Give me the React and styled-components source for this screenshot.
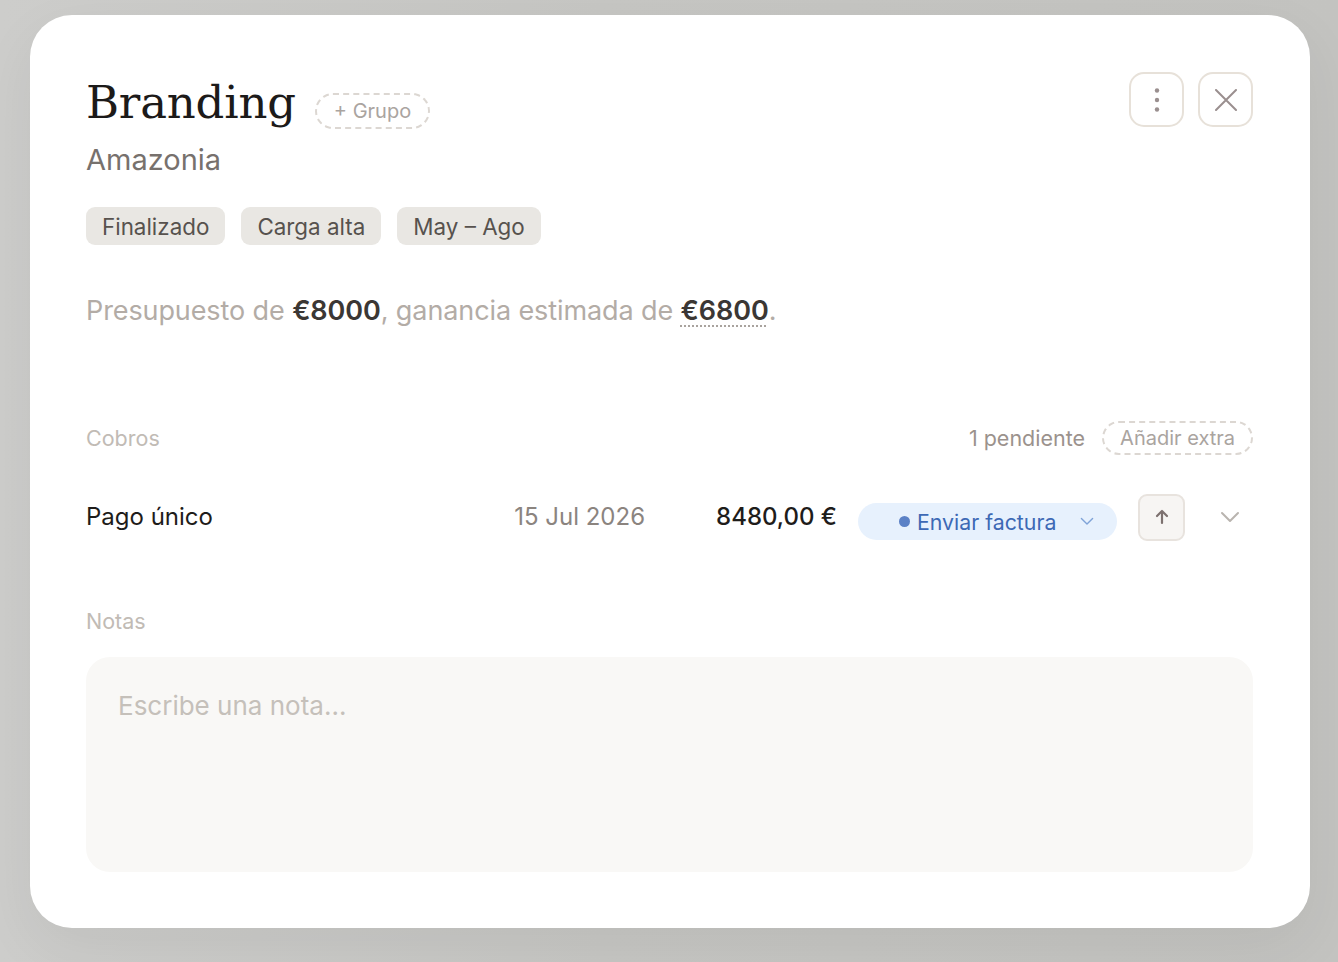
import React from 'react'
import styled, { createGlobalStyle } from 'styled-components'

const Global = createGlobalStyle`
  html, body { margin: 0; padding: 0; }
  body {
    background: #c7c7c4;
    font-family: Inter, "Noto Sans", sans-serif;
    -webkit-font-smoothing: antialiased;
  }
  * { box-sizing: border-box; }
`

const Page = styled.div`
  width: 1338px;
  height: 962px;
  padding: 15px 28px 34px 30px;
  background: linear-gradient(90deg, #cdcdcb 0%, #c6c6c3 45%, #c3c3c0 100%);
  overflow: hidden;
`

const Modal = styled.section`
  width: 1280px;
  height: 913px;
  background: #fff;
  border-radius: 42px;
  padding: 57px 57px 56px 56px;
  display: flex;
  flex-direction: column;
  box-shadow: 0 20px 60px rgba(0, 0, 0, 0.06);
`

const Header = styled.header`
  display: flex;
  justify-content: space-between;
  align-items: flex-start;
`

const TitleBlock = styled.div`
  display: flex;
  flex-direction: column;
`

const TitleRow = styled.div`
  display: flex;
  align-items: baseline;
  gap: 19px;
`

const Title = styled.h1`
  margin: 0;
  font-family: "DejaVu Serif", "Liberation Serif", serif;
  font-weight: 400;
  font-size: 45px;
  line-height: 62px;
  letter-spacing: -0.2px;
  color: #1c1a19;
`

const DashedPill = styled.button`
  font-family: Inter, sans-serif;
  font-size: ${p => p.$size || 20}px;
  color: #aaa4a0;
  background: transparent;
  border: 2px dashed #dcd7d2;
  border-radius: 999px;
  padding: ${p => p.$pad || '4px 17px'};
  line-height: 24px;
  cursor: pointer;
`

const Client = styled.div`
  margin-top: 8px;
  font-size: 29px;
  line-height: 36px;
  color: #77716d;
`

const Actions = styled.div`
  display: flex;
  gap: 14px;
`

const IconButton = styled.button`
  width: 55px;
  height: 55px;
  border-radius: 15px;
  border: 2px solid #e7e1d9;
  background: #fff;
  display: flex;
  align-items: center;
  justify-content: center;
  padding: 0;
  cursor: pointer;
`

const Tags = styled.div`
  display: flex;
  gap: 16px;
  margin-top: 29px;
`

const Tag = styled.span`
  height: 38px;
  padding: 0 16px;
  border-radius: 9px;
  background: #e9e7e3;
  color: #57524e;
  font-size: 22.4px;
  display: flex;
  align-items: center;
`

const Budget = styled.p`
  margin: 48px 0 0;
  font-size: 27px;
  line-height: 36px;
  color: #b3aca6;
  letter-spacing: -0.1px;
`

const Strong = styled.b`
  font-weight: 600;
  color: #3b3734;
  ${p => p.$dotted && `
    text-decoration: underline dotted #a9a39e 2px;
    text-underline-offset: 5px;
  `}
`

const SectionHead = styled.div`
  margin-top: ${p => p.$top}px;
  display: flex;
  justify-content: space-between;
  align-items: center;
  min-height: 36px;
`

const Label = styled.span`
  font-size: 21.5px;
  color: #c1bbb5;
`

const HeadRight = styled.div`
  display: flex;
  align-items: center;
  gap: 17px;
`

const Pending = styled.span`
  font-size: 21.5px;
  color: #9b928d;
`

const PayRow = styled.div`
  margin-top: 38px;
  height: 46px;
  display: flex;
  align-items: center;
`

const PayName = styled.span`
  flex: 1;
  font-size: 24px;
  color: #1e1c1a;
  margin-top: -2px;
`

const PayDate = styled.span`
  font-size: 24px;
  color: #8b847f;
  margin-right: 71px;
  margin-top: -2px;
`

const PayAmount = styled.span`
  font-size: 24px;
  font-weight: 500;
  color: #1e1c1a;
  margin-right: 21px;
  margin-top: -2px;
`

const StatusPill = styled.button`
  width: 259px;
  height: 37px;
  margin-top: 9px;
  border: none;
  border-radius: 999px;
  background: #e7f1fd;
  color: #3d69b5;
  font-family: Inter, sans-serif;
  font-size: 21.3px;
  display: flex;
  align-items: center;
  padding: 0 0 0 41px;
  cursor: pointer;
`

const Dot = styled.span`
  width: 11px;
  height: 11px;
  border-radius: 50%;
  background: #5b81c6;
  margin-right: 7px;
`

const PillChevron = styled.span`
  margin-left: 24px;
  display: flex;
`

const UpButton = styled.button`
  width: 47px;
  height: 47px;
  margin-left: 21px;
  border-radius: 9px;
  border: 2px solid #e8e3de;
  background: #f7f5f3;
  display: flex;
  align-items: center;
  justify-content: center;
  padding: 0;
`

const Expand = styled.span`
  width: 46px;
  margin-left: 22px;
  display: flex;
  justify-content: center;
`

const Notes = styled.textarea`
  margin-top: 18px;
  width: 100%;
  height: 215px;
  border: none;
  border-radius: 24px;
  background: #f9f8f6;
  padding: 31px 32px;
  font-family: Inter, sans-serif;
  font-size: 26px;
  line-height: 35px;
  color: #3b3734;
  resize: none;
  outline: none;
  &::placeholder { color: #c5c0ba; }
`

const Kebab = () => (
  <svg width="10" height="30" viewBox="0 0 10 30">
    <circle cx="5" cy="5.5" r="2.2" fill="#9a8f8f" />
    <circle cx="5" cy="15" r="2.2" fill="#9a8f8f" />
    <circle cx="5" cy="24.5" r="2.2" fill="#9a8f8f" />
  </svg>
)

const Close = () => (
  <svg width="22" height="22" viewBox="0 0 22 22" fill="none" stroke="#9a8f8f" strokeWidth="2" strokeLinecap="round">
    <path d="M1 1l20 20M21 1L1 21" />
  </svg>
)

const ArrowUp = () => (
  <svg width="16" height="16" viewBox="0 0 16 16" fill="none" stroke="#7d716f" strokeWidth="2.2" strokeLinecap="round" strokeLinejoin="round">
    <path d="M8 14V2M3 7l5-5 5 5" />
  </svg>
)

const Chevron = ({ size, color, width = 2 }) => (
  <svg width={size} height={size * 0.6} viewBox="0 0 20 12" fill="none" stroke={color} strokeWidth={width} strokeLinecap="round" strokeLinejoin="round">
    <path d="M2 2l8 8 8-8" />
  </svg>
)

export default function App() {
  return (
    <>
      <Global />
      <Page>
        <Modal>
          <Header>
            <TitleBlock>
              <TitleRow>
                <Title>Branding</Title>
                <DashedPill>+ Grupo</DashedPill>
              </TitleRow>
              <Client>Amazonia</Client>
            </TitleBlock>
            <Actions>
              <IconButton aria-label="Más"><Kebab /></IconButton>
              <IconButton aria-label="Cerrar"><Close /></IconButton>
            </Actions>
          </Header>

          <Tags>
            <Tag>Finalizado</Tag>
            <Tag>Carga alta</Tag>
            <Tag>May – Ago</Tag>
          </Tags>

          <Budget>
            Presupuesto de <Strong>€8000</Strong>, ganancia estimada de <Strong $dotted>€6800</Strong>.
          </Budget>

          <SectionHead $top={91}>
            <Label>Cobros</Label>
            <HeadRight>
              <Pending>1 pendiente</Pending>
              <DashedPill $pad="3px 16px">Añadir extra</DashedPill>
            </HeadRight>
          </SectionHead>

          <PayRow>
            <PayName>Pago único</PayName>
            <PayDate>15 Jul 2026</PayDate>
            <PayAmount>8480,00 €</PayAmount>
            <StatusPill>
              <Dot />
              Enviar factura
              <PillChevron><Chevron size={14} color="#7fa3d8" /></PillChevron>
            </StatusPill>
            <UpButton aria-label="Subir"><ArrowUp /></UpButton>
            <Expand><Chevron size={20} color="#b9b4af" /></Expand>
          </PayRow>

          <SectionHead $top={63}>
            <Label>Notas</Label>
          </SectionHead>
          <Notes placeholder="Escribe una nota..." />
        </Modal>
      </Page>
    </>
  )
}
